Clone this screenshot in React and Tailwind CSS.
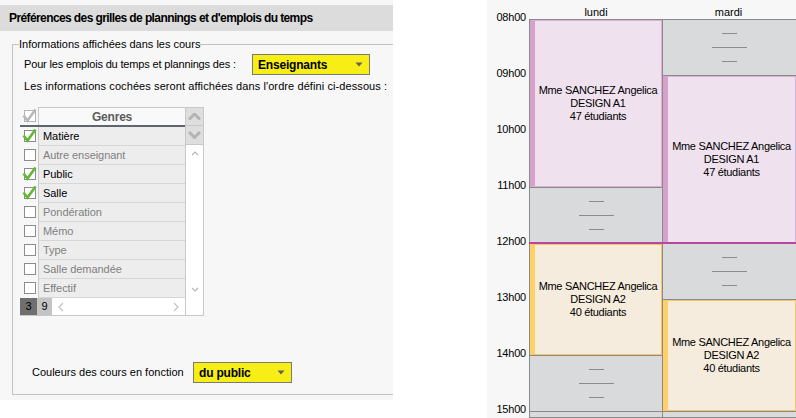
import React from "react";

const rows = [
  { label: "Matière", checked: true },
  { label: "Autre enseignant", checked: false },
  { label: "Public", checked: true },
  { label: "Salle", checked: true },
  { label: "Pondération", checked: false },
  { label: "Mémo", checked: false },
  { label: "Type", checked: false },
  { label: "Salle demandée", checked: false },
  { label: "Effectif", checked: false },
];

function Box({ checked, gray }) {
  return (
    <svg width="18" height="19" viewBox="0 0 18 19" className="block">
      <rect x="4.5" y="3.5" width="11" height="11" fill="#fff" stroke={gray ? "#b4b4b4" : "#8c8c8c"} />
      {checked && (
        <path
          d="M3.5 8.5 L7.5 13.5 L15.5 2.5"
          fill="none"
          stroke={gray ? "#b8b8b8" : "#62b832"}
          strokeWidth="2.6"
          strokeLinejoin="miter"
        />
      )}
    </svg>
  );
}

function Select({ label, className }) {
  return (
    <div
      className={`h-[21px] bg-[#f6ee14] border border-[#7a7a7a] flex items-center justify-between pl-[5px] pr-[6px] font-bold text-[12px] tracking-[-0.2px] ${className}`}
    >
      <span>{label}</span>
      <svg width="8" height="5" viewBox="0 0 8 5" className="block">
        <polygon points="0.5,0.5 7.5,0.5 4,4.5" fill="#606060" />
      </svg>
    </div>
  );
}

function Chevron({ dir, size = 10, stroke = "#b4b4b4", width = 3 }) {
  const h = size / 2;
  const d =
    dir === "up"
      ? `M1 ${h + 1} L${size / 2 + 1} 1 L${size + 1} ${h + 1}`
      : dir === "down"
      ? `M1 1 L${size / 2 + 1} ${h + 1} L${size + 1} 1`
      : dir === "left"
      ? `M${h + 1} 1 L1 ${size / 2 + 1} L${h + 1} ${size + 1}`
      : `M1 1 L${h + 1} ${size / 2 + 1} L1 ${size + 1}`;
  const horiz = dir === "up" || dir === "down";
  return (
    <svg
      width={horiz ? size + 2 : h + 2}
      height={horiz ? h + 2 : size + 2}
      className="block"
    >
      <path d={d} fill="none" stroke={stroke} strokeWidth={width} />
    </svg>
  );
}

function Table() {
  return (
    <div className="mt-[14px] w-[184px] flex flex-col">
      <div className="flex">
        <div className="w-[165px] flex flex-col">
          <div className="flex h-[18px]">
            <div className="w-[18px]">
              <Box checked gray />
            </div>
            <div className="flex-1 border-l border-t border-[#c8c8c8] bg-[#f9f9f9] flex items-center justify-center font-bold text-[12px] text-[#5c5c5c] tracking-[-0.2px]">
              Genres
            </div>
          </div>
          <div className="h-[2px] bg-[#60646c]" />
          {rows.map((r) => (
            <div key={r.label} className="flex h-[19px]">
              <div className="w-[18px]">
                <Box checked={r.checked} />
              </div>
              <div
                className={`flex-1 border-l border-b border-[#c8c8c8] border-b-[#d6d6d6] bg-[#ededed] pl-[4px] flex items-center tracking-[-0.05px] ${
                  r.checked ? "text-black" : "text-[#808080]"
                }`}
              >
                {r.label}
              </div>
            </div>
          ))}
        </div>
        <div className="w-[19px] flex flex-col border-r border-t border-l border-[#c8c8c8]">
          <div className="h-[18px] bg-[#dedede] border-b border-[#c8c8c8] flex items-center justify-center">
            <Chevron dir="up" size={11} />
          </div>
          <div className="h-[19px] bg-[#dedede] border-b border-[#c8c8c8] flex items-center justify-center">
            <Chevron dir="down" size={11} />
          </div>
          <div className="flex-1 bg-white flex flex-col items-center justify-between py-[6px]">
            <Chevron dir="up" size={6} width={1.2} stroke="#b8b8b8" />
            <Chevron dir="down" size={6} width={1.2} stroke="#b8b8b8" />
          </div>
        </div>
      </div>
      <div className="flex h-[18px] border-b border-[#c8c8c8]">
        <div className="w-[17px] bg-[#6f6f6f] flex items-center justify-center">3</div>
        <div className="w-[15px] bg-[#c4c4c4] flex items-center justify-center">9</div>
        <div className="w-[133px] bg-white flex items-center justify-between px-[6px]">
          <Chevron dir="left" size={8} width={1.3} stroke="#c4c4c4" />
          <Chevron dir="right" size={8} width={1.3} stroke="#c4c4c4" />
        </div>
        <div className="w-[19px] bg-white border-l border-r border-[#c8c8c8]" />
      </div>
    </div>
  );
}

function LeftPanel() {
  return (
    <div className="w-[393px] h-[400px] shrink-0 bg-[#f7f7f7] overflow-hidden pt-[5px]">
      <div className="h-[26px] bg-[#dcdcdc] flex items-center pl-[9px] text-[12px] font-bold tracking-[-0.6px]">
        Préférences des grilles de plannings et d'emplois du temps
      </div>
      <fieldset className="ml-[12px] mt-[7px] w-[420px] border border-[#c2c2c2] pl-[7px] pb-[11px]">
        <legend className="ml-[-1px] leading-[13px] tracking-[0px]">
          Informations affichées dans les cours
        </legend>
        <div className="flex items-center mt-[3px] pl-[4px]">
          <span className="w-[228px] tracking-[-0.16px]">
            Pour les emplois du temps et plannings des :
          </span>
          <Select label="Enseignants" className="w-[118px]" />
        </div>
        <div className="mt-[5px] pl-[4px] leading-[13px] tracking-[0.09px]">
          Les informations cochées seront affichées dans l'ordre défini ci-dessous :
        </div>
        <Table />
        <div className="flex items-center mt-[46px] pl-[12px]">
          <span className="w-[161px] tracking-[0px]">Couleurs des cours en fonction</span>
          <Select label="du public" className="w-[99px] h-[20px]" />
        </div>
      </fieldset>
    </div>
  );
}

function Gray({ h, grow }) {
  return (
    <div
      className={`${grow ? "flex-1" : h} shrink-0 bg-[#d9dadc] border-b border-[#8a8a8a] flex flex-col items-center justify-center gap-[13px] overflow-hidden`}
    >
      <div className="w-[15px] h-px bg-[#8c8c8c]" />
      <div className="w-[35px] h-px bg-[#8c8c8c]" />
      <div className="w-[15px] h-px bg-[#8c8c8c]" />
    </div>
  );
}

function Course({ h, kind, group, count }) {
  const pink = kind === "pink";
  return (
    <div className={`${h} shrink-0 border-b border-[#8a8a8a]`}>
      <div
        className={`h-full border border-l-[5px] flex flex-col items-center justify-center leading-[13px] tracking-[-0.3px] ${
          pink
            ? "bg-[#efe2ee] border-[#dab1d4] border-l-[#d6a1cc]"
            : "bg-[#f5ecdd] border-[#f6c466] border-l-[#fdd068]"
        }`}
      >
        <div>Mme SANCHEZ Angelica</div>
        <div>{group}</div>
        <div>{count} étudiants</div>
      </div>
    </div>
  );
}

function Timetable() {
  const hours = ["08h00", "09h00", "10h00", "11h00", "12h00", "13h00", "14h00", "15h00"];
  return (
    <div className="ml-[94px] flex-1 h-[418px] bg-[#f7f7f7] flex overflow-hidden">
      <div className="w-[42px] shrink-0 pt-[11px] pr-[3px] flex flex-col">
        {hours.map((h) => (
          <div key={h} className="h-[56px] shrink-0 leading-[13px] text-right tracking-[-0.2px]">
            {h}
          </div>
        ))}
      </div>
      <div className="flex-1 flex flex-col">
        <div className="h-[19px] shrink-0 flex pt-[7px] leading-[11px]">
          <div className="w-[134px] text-center">lundi</div>
          <div className="flex-1 text-center pr-[2px]">mardi</div>
        </div>
        <div className="relative flex-1 flex border-t border-[#8a8a8a] min-h-0">
          <div className="w-[134px] shrink-0 border-l border-r border-[#8a8a8a] flex flex-col">
            <Course h="h-[168px]" kind="pink" group="DESIGN A1" count="47" />
            <Gray h="h-[56px]" />
            <Course h="h-[112px]" kind="yellow" group="DESIGN A2" count="40" />
            <Gray h="h-[56px]" />
            <Gray grow />
          </div>
          <div className="flex-1 flex flex-col">
            <Gray h="h-[56px]" />
            <Course h="h-[168px]" kind="pink" group="DESIGN A1" count="47" />
            <Gray h="h-[56px]" />
            <Course h="h-[112px]" kind="yellow" group="DESIGN A2" count="40" />
            <Gray grow />
          </div>
          <div className="absolute left-0 right-0 top-[222px] h-[2px] bg-[#b5479e]" />
        </div>
      </div>
    </div>
  );
}

export default function App() {
  return (
    <div className="w-[796px] h-[418px] bg-white flex font-['Liberation_Sans',Arial,sans-serif] text-[11px] text-black overflow-hidden">
      <LeftPanel />
      <Timetable />
    </div>
  );
}
